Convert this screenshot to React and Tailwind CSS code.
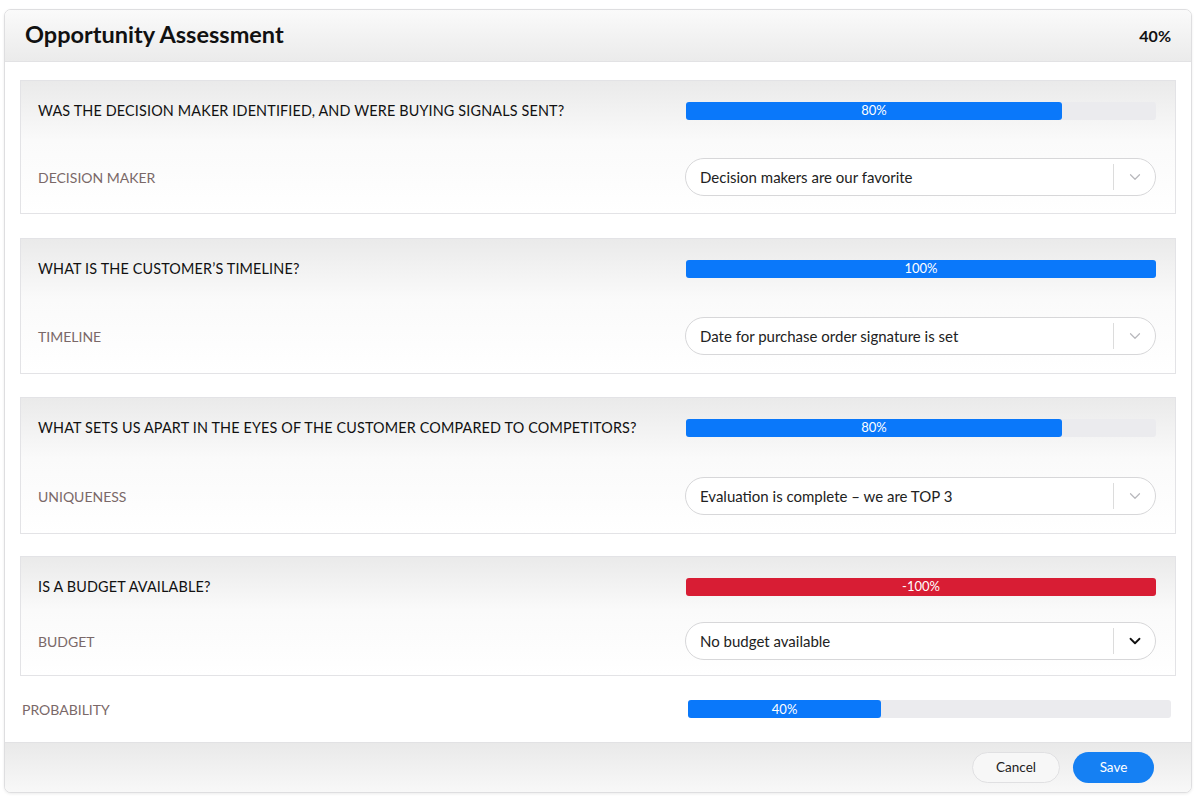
import { ChevronDown } from "lucide-react";

const questions = [
  {
    id: 1,
    question: "WAS THE DECISION MAKER IDENTIFIED, AND WERE BUYING SIGNALS SENT?",
    value: 80,
    label: "DECISION MAKER",
    answer: "Decision makers are our favorite",
    space: "mt-[18px] pb-[17px]",
  },
  {
    id: 2,
    question: "WHAT IS THE CUSTOMER’S TIMELINE?",
    value: 100,
    label: "TIMELINE",
    answer: "Date for purchase order signature is set",
    space: "mt-[19px] pb-[18px]",
  },
  {
    id: 3,
    question: "WHAT SETS US APART IN THE EYES OF THE CUSTOMER COMPARED TO COMPETITORS?",
    value: 80,
    label: "UNIQUENESS",
    answer: "Evaluation is complete – we are TOP 3",
    space: "mt-[20px] pb-[18px]",
  },
  {
    id: 4,
    question: "IS A BUDGET AVAILABLE?",
    value: -100,
    label: "BUDGET",
    answer: "No budget available",
    space: "mt-[6px] pb-[15px]",
    active: true,
  },
];

const ScoreBar = ({ value, wide }) => {
  const negative = value < 0;
  return (
    <div className={`h-[18px] rounded-[3px] bg-[#ebebee] ${wide ? "w-[483px]" : "w-[470px]"}`}>
      <div
        className={`h-full rounded-[3px] flex items-center justify-center text-[13px] leading-none text-white ${
          negative ? "bg-[#d81d34]" : "bg-[#0a78fa]"
        }`}
        style={{ width: `${Math.abs(value)}%` }}
      >
        {value}%
      </div>
    </div>
  );
};

const Dropdown = ({ text, active }) => (
  <div className="w-[471px] h-[38px] rounded-full border border-[#d7d7d9] bg-white flex items-center pl-[14px] pr-[11px]">
    <span className="flex-1 text-[15px] text-[#222]">{text}</span>
    <span className="w-px h-[26px] bg-[#dcdcdc]" />
    <ChevronDown
      size={18}
      strokeWidth={active ? 2.4 : 1.6}
      className={`ml-[12px] ${active ? "text-[#111]" : "text-[#b8b8bc]"}`}
    />
  </div>
);

const QuestionCard = ({ item }) => (
  <div className="border border-[#e3e3e6] bg-linear-to-b from-[#eaeaea] via-[#fafafa] via-45% to-white pl-[17px] pr-[19px]">
    <div className="h-[59px] flex items-center justify-between">
      <p className="text-[14.4px] text-[#111] tracking-[0.15px]">{item.question}</p>
      <ScoreBar value={item.value} />
    </div>
    <div className={`flex items-center justify-between ${item.space}`}>
      <p className="text-[14px] text-[#7a6868]">{item.label}</p>
      <Dropdown text={item.answer} active={item.active} />
    </div>
  </div>
);

export default function App() {
  return (
    <div className="min-h-screen bg-white pt-[9px] pl-[4px] font-['Lato','Liberation_Sans',sans-serif]">
      <div className="w-[1188px] rounded-[7px] border border-[#dedee0] shadow-[0_1px_3px_rgba(0,0,0,0.08)] overflow-hidden bg-white">
        <div className="h-[52px] flex items-center justify-between pl-[20px] pr-[20px] border-b border-[#e2e2e4] bg-linear-to-b from-[#fafafa] to-[#ebebeb]">
          <h1 className="text-[23.5px] font-bold text-[#111] -mt-[2px]">Opportunity Assessment</h1>
          <span className="text-[16px] font-bold text-[#111]">40%</span>
        </div>

        <div className="px-[15px] pt-[18px]">
          <div className="flex flex-col">
            {questions.map((item, i) => (
              <div key={item.id} className={i === 1 ? "mt-[24px]" : i === 2 ? "mt-[23px]" : i === 3 ? "mt-[22px]" : ""}>
                <QuestionCard item={item} />
              </div>
            ))}
          </div>
          <div className="h-[66px] flex items-center justify-between pl-[2px] pr-[5px]">
            <p className="text-[14px] text-[#7a6868]">PROBABILITY</p>
            <ScoreBar value={40} wide />
          </div>
        </div>

        <div className="h-[50px] border-t border-[#e2e2e4] bg-linear-to-b from-[#e9e9e9] to-[#f8f8f8] flex items-center justify-end gap-[13px] pr-[37px]">
          <button className="w-[88px] h-[31px] rounded-full border border-[#e0e0e2] bg-[#f7f7f7] text-[13.5px] text-[#222]">
            Cancel
          </button>
          <button className="w-[81px] h-[31px] rounded-full bg-[#1580f3] text-[13.5px] text-white">
            Save
          </button>
        </div>
      </div>
    </div>
  );
}
